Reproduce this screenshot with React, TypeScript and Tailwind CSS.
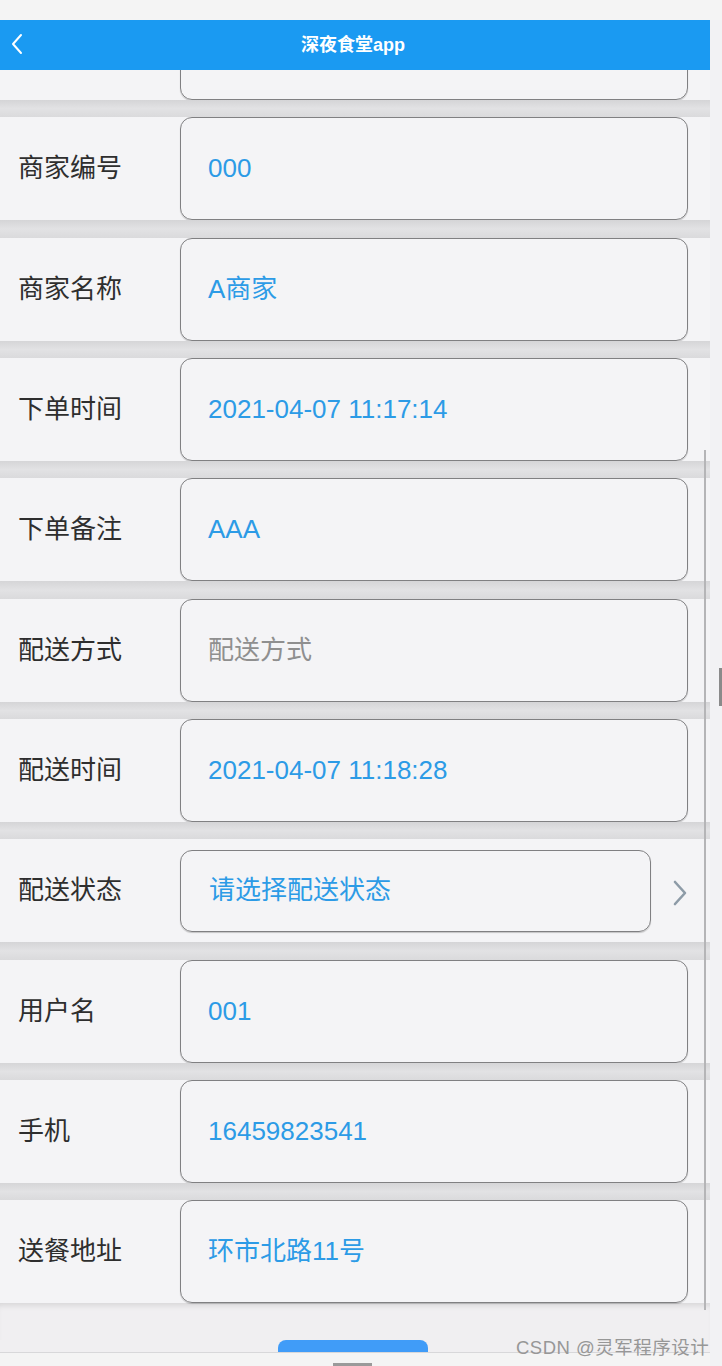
import React from "react";

type Field = { label: string; value: string; kind?: "placeholder" | "select" };

const FIELDS: Field[] = [
  { label: "商家编号", value: "000" },
  { label: "商家名称", value: "A商家" },
  { label: "下单时间", value: "2021-04-07 11:17:14" },
  { label: "下单备注", value: "AAA" },
  { label: "配送方式", value: "配送方式", kind: "placeholder" },
  { label: "配送时间", value: "2021-04-07 11:18:28" },
  { label: "配送状态", value: "请选择配送状态", kind: "select" },
  { label: "用户名", value: "001" },
  { label: "手机", value: "16459823541" },
  { label: "送餐地址", value: "环市北路11号" },
];

const FONT = { fontFamily: '"Liberation Sans", "Noto Sans CJK SC", sans-serif' };

function Separator() {
  return <div className="h-[17.33px] shrink-0 bg-gradient-to-b from-[#d5d5d7] via-[#e2e2e4] to-[#dadadc]" />;
}

function Row({ f }: { f: Field }) {
  const select = f.kind === "select";
  return (
    <div className="h-[103px] shrink-0 flex items-center bg-[#f4f4f6]">
      <div className="w-[180px] pl-[18px] text-[26px] text-[#2e2e2e]">{f.label}</div>
      <div
        className={
          select
            ? "w-[471px] h-[82px] flex items-center pl-[28px] rounded-[12px] border border-[#808082] shadow-[0_1px_1px_rgba(0,0,0,0.2)]"
            : "w-[508px] h-full flex items-center pl-[27px] rounded-[12px] border border-[#808082] shadow-[0_1px_1px_rgba(0,0,0,0.2)]"
        }
      >
        <span className={f.kind === "placeholder" ? "text-[26px] text-[#8f8f8f]" : "text-[26px] text-[#2c9be6]"}>
          {f.value}
        </span>
      </div>
      {select && (
        <svg width="16" height="26" viewBox="0 0 16 26" className="ml-[21px] mt-[4px]">
          <polyline points="3,2 13,13 3,24" fill="none" stroke="#8d9ba7" strokeWidth="2.6" strokeLinecap="round" strokeLinejoin="round" />
        </svg>
      )}
    </div>
  );
}

export default function App() {
  return (
    <div className="relative w-[722px] h-[1366px] overflow-hidden flex flex-col bg-[#f2f2f4]" style={FONT}>
      <div className="h-[20px] shrink-0 bg-[#f4f4f4]" />

      <div className="flex-1 flex min-h-0">
        <div className="w-[710px] flex flex-col min-h-0">
          {/* header */}
          <div className="h-[50px] shrink-0 relative flex items-center justify-center bg-[#1a9af2]">
            <svg width="14" height="22" viewBox="0 0 14 22" className="absolute left-[10px] top-[13px]">
              <polyline points="11,2 3,11 11,20" fill="none" stroke="#ffffff" strokeWidth="2" strokeLinecap="round" strokeLinejoin="round" />
            </svg>
            <span className="text-[18px] font-bold text-white -ml-[4px]">深夜食堂app</span>
          </div>

          {/* list */}
          <div className="flex-1 flex flex-col min-h-0 overflow-hidden bg-[#f0eff1]">
            <div className="h-[103px] shrink-0 -mt-[73px] flex items-center bg-[#f4f4f6]">
              <div className="ml-[180px] w-[508px] h-full rounded-[12px] border border-[#808082] shadow-[0_1px_1px_rgba(0,0,0,0.2)]" />
            </div>
            {FIELDS.map((f) => (
              <React.Fragment key={f.label}>
                <Separator />
                <Row f={f} />
              </React.Fragment>
            ))}
            <div className="h-[37px] shrink-0 shadow-[inset_0_6px_6px_-4px_rgba(0,0,0,0.12)]" />
            <div className="h-[12px] shrink-0 pl-[278px]">
              <div className="w-[150px] h-full rounded-t-[8px] bg-[#409cf8]" />
            </div>
            <div className="flex-1 border-t border-[#d8d8da] bg-[#f4f4f4] pl-[333px] pt-[10px]">
              <div className="w-[39px] h-[4px] bg-[#9a9a9a]" />
            </div>
          </div>
        </div>
        <div className="flex-1 bg-[#f2f2f4]" />
      </div>

      {/* inner scroll line */}
      <div className="absolute left-[704px] top-[450px] w-[2px] h-[860px] bg-[#b5b5b7]" />
      {/* window scroll thumb */}
      <div className="absolute left-[719px] top-[668px] w-[3px] h-[38px] bg-[#8a8a8a]" />

      <div className="absolute left-[516px] top-[1334px] text-[18.5px] text-[#979797] tracking-[0.5px]">CSDN @灵军程序设计</div>
    </div>
  );
}
